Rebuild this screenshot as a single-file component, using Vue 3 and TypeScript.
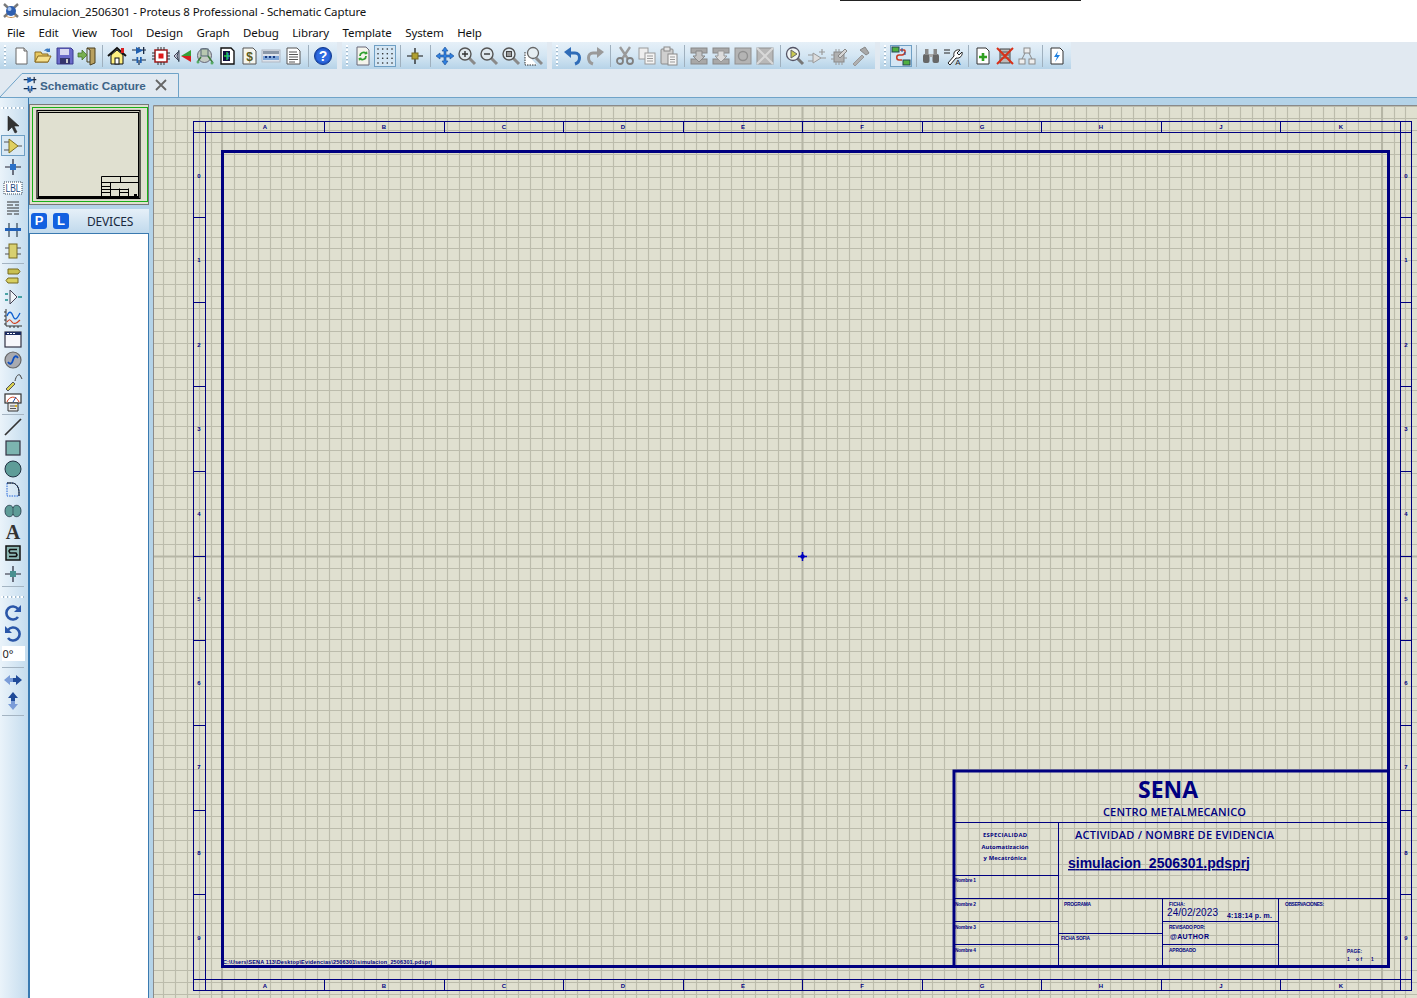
<script setup lang="ts">
import { computed } from 'vue'

// toolbar icons, inner markup of a 20x20 svg
const ink = '#222'
const dis = '#9a9a9a'
const icons: Record<string, string> = {
  newDoc: `<path d="M5 2h8l3 3v13H5z" fill="#fff" stroke="#666"/><path d="M13 2v3h3" fill="#ddd" stroke="#666"/>`,
  open: `<path d="M2 16V6h6l1 2h6v8z" fill="#e8c860" stroke="#8a6a20"/><path d="M2 16l3-6h13l-3 6z" fill="#f6e08c" stroke="#8a6a20"/><path d="M11 5c1-2 3-3 5-2l1-1v4h-4l1-1c-1-.5-2 0-3 0z" fill="#3a78c0"/>`,
  save: `<path d="M2 2h14l2 2v14H2z" fill="#6a6ac8" stroke="#3a3a90"/><rect x="5" y="3" width="9" height="6" fill="#d8d8f0"/><rect x="5" y="12" width="10" height="6" fill="#34346c"/><rect x="11" y="13" width="2" height="4" fill="#ccc"/>`,
  importDoor: `<path d="M10 2h8v15l-5 2V4z" fill="#b8a060" stroke="#4a4020"/><path d="M10 2v14h3" fill="none" stroke="#4a4020"/><path d="M1 7h4V4l5 5-5 5v-3H1z" fill="#78b050" stroke="#3c6c20" stroke-width=".7"/>`,
  home: `<path d="M1 10l9-8 9 8" fill="none" stroke="#111" stroke-width="2"/><path d="M4 9v9h12V9l-6-5z" fill="#fff080" stroke="#111"/><rect x="8" y="12" width="4" height="6" fill="#fff" stroke="#111"/><rect x="14" y="2" width="3" height="5" fill="#d82020"/>`,
  schem: `<path d="M10 1v5M3 4h14M10 14v5M3 14h5M12 14h5" stroke="#1a2a44" stroke-width="1.200" fill="none"/><path d="M7 1l7 3.500-7 3.500z" fill="#1f5fb0"/><rect x="14" y="1" width="1.300" height="7" fill="#1a2a44"/><rect x="7.500" y="11" width="1.700" height="6" fill="#1f5fb0"/><rect x="11" y="11" width="1.700" height="6" fill="#1f5fb0"/>`,
  chip: `<rect x="4" y="4" width="12" height="12" fill="#fff" stroke="#a01818" stroke-width="1.500"/><rect x="7.500" y="7.500" width="5" height="5" fill="#e01818"/><path d="M7 1v3M10 1v3M13 1v3M7 16v3M10 16v3M13 16v3M1 7h3M1 10h3M1 13h3M16 7h3M16 10h3M16 13h3" stroke="#333"/>`,
  view3d: `<path d="M1 10l5-5v10z" fill="#ccd" stroke="#445"/><path d="M8 10l10-6v6z" fill="#38a038"/><path d="M8 10h10v6z" fill="#d82020"/><path d="M6 4l-2 6 2 6" fill="none" stroke="#345"/>`,
  gerber: `<circle cx="9.500" cy="9.500" r="7" fill="#c4ccc4" stroke="#667"/><rect x="6" y="3" width="7" height="7" fill="#b8c8b0" stroke="#567"/><path d="M3 15l3-4M13 10l5 7" stroke="#3a7a3a" stroke-width="1.500"/><circle cx="3" cy="16" r="1.500" fill="#5a6"/><circle cx="17" cy="17" r="1.500" fill="#5a6"/>`,
  explorer: `<path d="M4 2h10l3 3v13H4z" fill="#fff" stroke="#111" stroke-width="1.400"/><rect x="6" y="5" width="7" height="10" fill="#101040"/><path d="M7 10h6M10 6v8" stroke="#20d040" stroke-width="1.400"/><path d="M11 7v6" stroke="#30a0f0"/>`,
  bom: `<path d="M4 2h10l3 3v13H4z" fill="#f6f6ee" stroke="#555"/><text x="10.500" y="15" font-size="12" font-family="Liberation Sans" font-weight="700" fill="#5a5a20" text-anchor="middle">$</text>`,
  ascii: `<rect x="1" y="4" width="18" height="12" fill="#dfe4ec" stroke="#b0b8c4"/><rect x="2" y="5" width="16" height="3" fill="#8c98a8"/><rect x="2" y="10" width="16" height="4" fill="#7fa6d8"/><path d="M4 11h2M8 11h2M12 11h2" stroke="#1a3a80" stroke-width="2.200"/>`,
  notes: `<path d="M4 2h10l3 3v13H4z" fill="#fff" stroke="#555"/><path d="M6 6h8M6 8.500h9M6 11h9M6 13.500h9M6 16h6" stroke="#555"/>`,
  help: `<circle cx="10" cy="10" r="8.500" fill="#2058c8" stroke="#123a90"/><circle cx="10" cy="10" r="6.800" fill="#2f6ae0"/><text x="10" y="15" font-size="14" font-family="Liberation Sans" font-weight="700" fill="#fff" text-anchor="middle">?</text>`,
  refresh: `<path d="M4 1h9l3 3v15H4z" fill="#f4f4ec" stroke="#667"/><path d="M7 10a3.500 3.500 0 0 1 6-2.500" fill="none" stroke="#30a030" stroke-width="1.800"/><path d="M13 10a3.500 3.500 0 0 1-6 2.500" fill="none" stroke="#30a030" stroke-width="1.800"/><path d="M11.500 8.500l3-.500-.5-3zM8.500 11.500l-3 .500.5 3z" fill="#30a030"/>`,
  grid: `<g fill="#222"><circle cx="3" cy="3" r=".8"/><circle cx="7.700" cy="3" r=".8"/><circle cx="12.300" cy="3" r=".8"/><circle cx="17" cy="3" r=".8"/><circle cx="3" cy="7.700" r=".8"/><circle cx="7.700" cy="7.700" r=".8"/><circle cx="12.300" cy="7.700" r=".8"/><circle cx="17" cy="7.700" r=".8"/><circle cx="3" cy="12.300" r=".8"/><circle cx="7.700" cy="12.300" r=".8"/><circle cx="12.300" cy="12.300" r=".8"/><circle cx="17" cy="12.300" r=".8"/><circle cx="3" cy="17" r=".8"/><circle cx="7.700" cy="17" r=".8"/><circle cx="12.300" cy="17" r=".8"/><circle cx="17" cy="17" r=".8"/></g>`,
  origin: `<path d="M10 2v16M2 10h16" stroke="#111" stroke-width="1.200"/><rect x="7" y="7" width="6" height="6" fill="#b0a030" stroke="#776a20"/>`,
  pan: `<path d="M10 1l3 4h-2v4h4V7l4 3-4 3v-2h-4v4h2l-3 4-3-4h2v-4H5v2l-4-3 4-3v2h4V5H7z" fill="#2f80e0" stroke="#1a4a90" stroke-width=".6"/>`,
  zoomIn: `<path d="M12 12l6 6" stroke="#8a8a8a" stroke-width="3"/><circle cx="8" cy="8" r="6" fill="#dfe8ee" stroke="#555" stroke-width="1.400"/><path d="M5 8h6M8 5v6" stroke="#333" stroke-width="1.400"/>`,
  zoomOut: `<path d="M12 12l6 6" stroke="#8a8a8a" stroke-width="3"/><circle cx="8" cy="8" r="6" fill="#dfe8ee" stroke="#555" stroke-width="1.400"/><path d="M5 8h6" stroke="#333" stroke-width="1.400"/>`,
  zoomFit: `<path d="M12 12l6 6" stroke="#8a8a8a" stroke-width="3"/><circle cx="8" cy="8" r="6" fill="#dfe8ee" stroke="#555" stroke-width="1.400"/><rect x="5.500" y="5.500" width="5" height="5" fill="#999" stroke="#444"/>`,
  zoomArea: `<path d="M2 6v13h12" fill="#fff" stroke="#333" stroke-dasharray="1.500 1"/><path d="M13 12l6 6" stroke="#8a8a8a" stroke-width="3"/><circle cx="10" cy="7" r="5.500" fill="#e6eef2" stroke="#666" stroke-width="1.300"/>`,
  undo: `<path d="M6 7h6c6 0 6 9 0 11" fill="none" stroke="#2f6cb8" stroke-width="3"/><path d="M8 1v11L1 6z" fill="#2f6cb8"/>`,
  redo: `<path d="M14 7H8c-6 0-6 9 0 11" fill="none" stroke="${dis}" stroke-width="3"/><path d="M12 1v11l7-6z" fill="${dis}"/>`,
  cut: `<path d="M5 1l8 12M15 1L7 13" stroke="#9a9a9a" stroke-width="2.400"/><circle cx="5" cy="15" r="3" fill="none" stroke="#808080" stroke-width="1.800"/><circle cx="15" cy="15" r="3" fill="none" stroke="#808080" stroke-width="1.800"/>`,
  copy: `<rect x="2" y="2" width="9" height="11" fill="#eee" stroke="${dis}"/><rect x="8" y="7" width="10" height="11" fill="#f4f4f4" stroke="${dis}"/><path d="M10 10h6M10 12.500h6M10 15h6" stroke="${dis}"/>`,
  paste: `<rect x="2" y="3" width="12" height="15" rx="1" fill="#cfcfcf" stroke="#8a8a8a"/><rect x="5" y="1" width="6" height="4" fill="#e4e4e4" stroke="#8a8a8a"/><rect x="9" y="8" width="9" height="11" fill="#f4f4f4" stroke="#8a8a8a"/><path d="M11 11h5M11 13.500h5M11 16h5" stroke="#999"/>`,
  blockCopy: `<rect x="2" y="2" width="16" height="5" fill="#a8a8a8" stroke="#888"/><rect x="2" y="13" width="16" height="5" fill="#a8a8a8" stroke="#888"/><path d="M7 5h6v5h3l-6 6-6-6h3z" fill="#c4c4c4" stroke="#888"/>`,
  blockMove: `<rect x="2" y="2" width="16" height="5" fill="#a8a8a8" stroke="#888"/><rect x="2" y="13" width="16" height="5" fill="#a8a8a8" stroke="#888"/><path d="M7 5h6v5h3l-6 6-6-6h3z" fill="#dcdcdc" stroke="#999"/>`,
  blockRotate: `<rect x="2" y="2" width="16" height="16" fill="#b4b4b4" stroke="#909090"/><circle cx="10" cy="10" r="4.500" fill="none" stroke="#909090" stroke-width="1.400"/>`,
  blockDelete: `<rect x="2" y="2" width="16" height="16" fill="#b8b8b8" stroke="#909090"/><path d="M2 2l16 16M18 2L2 18" stroke="#d8d8d8" stroke-width="2"/>`,
  pick: `<path d="M12 12l6 6" stroke="#777" stroke-width="3"/><circle cx="8" cy="8" r="6.500" fill="#f0f4f4" stroke="#556" stroke-width="1.300"/><path d="M6 4l6 4-6 4z" fill="#c8c850" stroke="#666"/>`,
  device: `<path d="M6 7v10l8-5z" fill="#ddd" stroke="${dis}"/><path d="M1 9h5M1 15h5M14 12h5M15 3v6M12 6h6" stroke="${dis}" stroke-width="1.200"/>`,
  package: `<rect x="5" y="6" width="10" height="10" fill="#b0b0b0" stroke="#888"/><path d="M7 3v3M10 3v3M7 16v3M10 16v3M13 16v3M2 9h3M2 13h3M15 12h3" stroke="#999"/><path d="M9 10l7-7 2 2-7 7z" fill="#d4d4d4" stroke="#888"/>`,
  tool: `<path d="M2 18l9-9 2 2-9 9z" fill="#b0b0b0" stroke="#999"/><path d="M9 4l5-3 4 6-3 2z" fill="#a8a8a8" stroke="#888"/>`,
  toggle: `<rect x="1" y="1" width="7" height="5" fill="#50b040" stroke="#245"/><rect x="12" y="14" width="7" height="5" fill="#50b040" stroke="#245"/><path d="M9 4h4c2 0 1 5-2 5H8c-3 0-3 5 0 5h3" fill="none" stroke="#c83820" stroke-width="1.500"/><path d="M11 2v4M14 6v3" stroke="#2050a0"/>`,
  find: `<rect x="2" y="8" width="6.500" height="9" rx="2" fill="#666"/><rect x="11.500" y="8" width="6.500" height="9" rx="2" fill="#666"/><rect x="4" y="3" width="3.500" height="6" fill="#888"/><rect x="12.500" y="3" width="3.500" height="6" fill="#888"/><rect x="8" y="8" width="4" height="3" fill="#aaa"/>`,
  wires: `<path d="M1 4h6M1 7h6" stroke="${ink}"/><path d="M5 17l6-7c-1-4 2-7 6-6l-3 3 2 2 3-3c1 3-2 7-6 6l-6 7z" fill="#fff" stroke="${ink}"/><text x="15" y="19" font-size="8" font-family="Liberation Sans" fill="${ink}" text-anchor="middle">A</text>`,
  addSheet: `<path d="M4 2h9l3 3v13H4z" fill="#fff" stroke="#333"/><path d="M10 7v8M6 11h8" stroke="#30a020" stroke-width="2.600"/>`,
  delSheet: `<rect x="5" y="3" width="10" height="14" fill="#bbb" stroke="#444"/><path d="M6 6h8M6 9h8M6 12h8" stroke="#555"/><path d="M2 2l16 16M18 2L2 18" stroke="#d83018" stroke-width="2"/>`,
  tree: `<rect x="7" y="2" width="6" height="5" fill="#eee" stroke="#8a8a8a"/><rect x="2" y="13" width="6" height="5" fill="#eee" stroke="#8a8a8a"/><rect x="12" y="13" width="6" height="5" fill="#eee" stroke="#8a8a8a"/><path d="M8 7l-3 6M12 7l3 6" stroke="#8a8a8a"/>`,
  mcad: `<path d="M4 2h9l3 3v13H4z" fill="#fff" stroke="#333"/><path d="M11 5l-4 6h3l-2 5 5-7h-3z" fill="#2080e0"/>`,
  select: `<path d="M5 1v15l4-4 3 6 2-1-3-6h5z" fill="#333" stroke="#222" stroke-width=".6"/>`,
  comp: `<path d="M6 3v14l9-7z" fill="#e0d060" stroke="#807020"/><path d="M1 6h5M1 14h5M15 10h4" stroke="#555" stroke-width="1.200"/>`,
  junction: `<path d="M10 2v16M2 10h16" stroke="#223" stroke-width="1.200"/><rect x="7" y="7" width="6" height="6" fill="#2a70c8"/>`,
  label: `<rect x="1" y="4" width="18" height="12" fill="#fff" stroke="#345" stroke-dasharray="1 1"/><text x="10" y="14" font-size="10" font-family="Liberation Sans" fill="#1a4a80" text-anchor="middle" textLength="15" lengthAdjust="spacingAndGlyphs">LBL</text>`,
  script: `<path d="M4 3h12M4 6h6M12 6h4M4 9h12M4 12h12M4 15h5M11 15h5" stroke="#333"/>`,
  bus: `<path d="M6 3v14M14 3v14" stroke="#234" stroke-width="1.100"/><rect x="2" y="8" width="16" height="3" fill="#2060b8"/>`,
  subckt: `<rect x="6" y="3" width="8" height="14" fill="#d8d070" stroke="#776a20"/><path d="M2 7h4M2 13h4M14 7h4M14 13h4" stroke="#555" stroke-width="1.200"/>`,
  terminal: `<path d="M5 3h10l2 2.500-2 2.500H5z" fill="#c8c050" stroke="#776a20"/><path d="M15 12H5l-2 2.500 2 2.500h10z" fill="#d8d060" stroke="#776a20"/>`,
  pin: `<path d="M7 3v14l7-7z" fill="#f0f4f8" stroke="#445"/><path d="M2 7h3M2 13h3M15 10h4" stroke="#1a8a8a" stroke-width="1.300"/>`,
  graph: `<path d="M3 1v17h16" fill="none" stroke="#333"/><path d="M1 4h2M1 8h2M1 12h2M1 16h2M7 18v2M11 18v2M15 18v2" stroke="#333"/><path d="M4 8c2-5 4-5 6 0s4 3 7-3" fill="none" stroke="#1060d0" stroke-width="1.300"/><path d="M4 14c2-3 3-3 5 0s5 1 8-2" fill="none" stroke="#d04020" stroke-width="1.200"/>`,
  tape: `<rect x="2" y="3" width="16" height="15" fill="#f6f6fa" stroke="#334" stroke-width="1.200"/><rect x="2" y="3" width="16" height="3" fill="#1a2a60"/><path d="M4 4.500h2M7 4.500h2M10 4.500h2" stroke="#fff"/>`,
  generator: `<circle cx="10" cy="10" r="8" fill="#a8aab0" stroke="#666" stroke-width="1.200"/><path d="M5 12c2 3 4 2 5-2s3-5 5-2" fill="none" stroke="#1050c0" stroke-width="1.800"/>`,
  probe: `<path d="M3 18l7-7 2 2-7 7z" fill="#d8d050" stroke="#555"/><path d="M12 10c1-5 3-7 5-6l2 4" fill="none" stroke="#444"/>`,
  meter: `<rect x="2" y="2" width="16" height="9" fill="#fff" stroke="#333" stroke-width="1.200"/><path d="M4 10c2-6 9-7 12 0" fill="none" stroke="#d04020"/><path d="M10 10l3-5" stroke="#1a4aa0"/><path d="M5 11h10v8H5z" fill="#e8e8e8" stroke="#333"/><path d="M7 14h5M7 16.500h6" stroke="#555"/><rect x="12" y="13" width="2" height="2" fill="#d8b020"/>`,
  line: `<path d="M2 18L18 2" stroke="#333" stroke-width="1.700"/>`,
  box: `<rect x="3" y="3" width="14" height="14" fill="#7cb4b0" stroke="#334" stroke-width="1.200"/>`,
  circle: `<circle cx="10" cy="10" r="8" fill="#5e9c98" stroke="#234" stroke-width="1"/>`,
  arc: `<path d="M4 3h5c4 0 7 4 7 9v4H4z" fill="none" stroke="#1f62d8" stroke-dasharray="1.500 1"/><path d="M4 3h5c4 0 7 4 7 9v4" fill="none" stroke="#111"/>`,
  path: `<path d="M2 10c0-7 7-7 8-3 1-4 8-4 8 3s-7 7-8 3c-1 4-8 4-8-3z" fill="#5e9c98" stroke="#234" stroke-width=".8"/><path d="M10 7v6" stroke="#234" stroke-width=".6"/>`,
  textA: `<text x="10" y="17" font-size="20" font-family="Liberation Serif" font-weight="700" fill="#333" text-anchor="middle">A</text>`,
  symbol: `<rect x="3" y="3" width="14" height="14" fill="#8cb8b4" stroke="#111" stroke-width="1.500"/><path d="M14 6.500H7l-1 1.500 1 2h6l1 2-1 1.500H6" fill="none" stroke="#111" stroke-width="1.600"/>`,
  marker: `<path d="M10 2v16M2 10h16" stroke="#223" stroke-width="1.200"/><rect x="7" y="7" width="6" height="6" fill="#4a9090"/>`,
  rotCw: `<path d="M15 14a6.500 6.500 0 1 1 0-8" fill="none" stroke="#2a56a8" stroke-width="2.600"/><path d="M18 2v7h-7z" fill="#2a56a8"/>`,
  rotCcw: `<path d="M5 14a6.500 6.500 0 1 0 0-8" fill="none" stroke="#2a56a8" stroke-width="2.600"/><path d="M2 2v7h7z" fill="#2a56a8"/>`,
  mirrorH: `<path d="M1 10l6-5v3h3v4H7v3z" fill="#7a9cd8"/><path d="M19 10l-6-5v3h-3v4h3v3z" fill="#1f4a98"/>`,
  mirrorV: `<path d="M10 1L5 7h3v3h4V7h3z" fill="#1f4a98"/><path d="M10 19l-5-6h3v-3h4v3h3z" fill="#7a9cd8"/>`,
}

const topGroups: string[][] = [
  ['newDoc', 'open', 'save', 'importDoor', '|', 'home', 'schem', 'chip', 'view3d', 'gerber', 'explorer', 'bom', 'ascii', 'notes', '|', 'help'],
  ['refresh', 'grid', '|', 'origin', '|', 'pan', 'zoomIn', 'zoomOut', 'zoomFit', 'zoomArea'],
  ['undo', 'redo', '|', 'cut', 'copy', 'paste', '|', 'blockCopy', 'blockMove', 'blockRotate', 'blockDelete', '|', 'pick', 'device', 'package', 'tool'],
  ['toggle', '|', 'find', 'wires', '|', 'addSheet', 'delSheet', 'tree', '|', 'mcad'],
]
const menus = ['File', 'Edit', 'View', 'Tool', 'Design', 'Graph', 'Debug', 'Library', 'Template', 'System', 'Help']
const sideTools = [
  ['select', 'comp', 'junction', 'label', 'script', 'bus', 'subckt'],
  ['terminal', 'pin', 'graph', 'tape', 'generator', 'probe', 'meter'],
  ['line', 'box', 'circle', 'arc', 'path', 'textA', 'symbol', 'marker'],
]

// sheet geometry, in page pixels (the svg viewBox starts at the canvas corner)
const originX = 802
const originY = 556
const pitch = 11.83

const gridX = computed(() => {
  const out: number[] = []
  for (let i = -55; i <= 55; i++) {
    const x = Math.round(originX + i * pitch) + 0.5
    if (x > 153 && x < 1417) out.push(x)
  }
  return out
})
const gridY = computed(() => {
  const out: number[] = []
  for (let i = -40; i <= 40; i++) {
    const y = Math.round(originY + i * pitch) + 0.5
    if (y > 105 && y < 998) out.push(y)
  }
  return out
})
const majorX = [222, 802.5, 1382]
const colTicks = [324.5, 444.5, 563.5, 683.5, 802.5, 922.5, 1041.5, 1161.5, 1280.5]
const rowTicks = [217.5, 302.5, 386.5, 471.5, 556.5, 640.5, 725.5, 810.5, 894.5]
const colLabels = [
  ['A', 265], ['B', 384], ['C', 504], ['D', 623], ['E', 743], ['F', 862], ['G', 982], ['H', 1101], ['J', 1221], ['K', 1341],
] as const
const rowLabels = [176, 260, 345, 429, 514, 599, 683, 767, 853, 938]
const blockLines = [
  [954, 822.5, 1388, 822.5],
  [1058.5, 822, 1058.5, 966],
  [954, 875.5, 1058, 875.5],
  [954, 898.5, 1388, 898.5],
  [954, 921.5, 1058, 921.5],
  [954, 944.5, 1058, 944.5],
  [1162.5, 898, 1162.5, 966],
  [1058, 933.5, 1162, 933.5],
  [1278.5, 898, 1278.5, 966],
  [1162, 921.5, 1278, 921.5],
  [1162, 944.5, 1278, 944.5],
]
const tinyLabels = [
  ['Nombre 1', 955, 882, 21],
  ['Nombre 2', 955, 906, 21],
  ['Nombre 3', 955, 929, 21],
  ['Nombre 4', 955, 952, 21],
  ['PROGRAMA', 1064, 906, 27],
  ['FICHA SOFIA', 1061, 940, 29],
  ['FICHA:', 1169, 906, 16],
  ['REVISADO POR:', 1169, 929, 36],
  ['APROBADO', 1169, 952, 27],
  ['OBSERVACIONES:', 1285, 906, 39],
] as const
</script>

<template>
  <div class="app">
    <div class="titlebar">
      <svg class="logo" width="16" height="16" viewBox="0 0 16 16">
        <path d="M1 1l14 13M15 1L1 14" stroke="#7a7a7a" stroke-width="2.400" />
        <circle cx="8" cy="8" r="5" fill="#2f5fb0" />
        <circle cx="6.500" cy="6" r="2" fill="#a8c4ee" />
        <path d="M3 13c3 2 7 2 10 0" stroke="#c89050" fill="none" />
      </svg>
      <span>simulacion_2506301 - Proteus 8 Professional - Schematic Capture</span>
      <div class="topline"></div>
    </div>

    <div class="menubar">
      <span v-for="m in menus" :key="m">{{ m }}</span>
    </div>

    <div class="toolbar">
      <div v-for="(group, g) in topGroups" :key="g" class="tgroup">
        <i class="grip"></i>
        <template v-for="(name, n) in group" :key="n">
          <i v-if="name === '|'" class="tsep"></i>
          <div v-else class="tbtn" :class="{ on: name === 'grid' || name === 'toggle' }">
            <svg width="20" height="20" viewBox="0 0 20 20" v-html="icons[name]"></svg>
          </div>
        </template>
      </div>
    </div>

    <div class="tabstrip">
      <div class="tab">
        <svg class="tabshape" width="180" height="25" viewBox="0 0 180 25">
          <path d="M0 24L22 .5H178.500V24" fill="#e1e9f1" stroke="#6fa3c8" />
        </svg>
        <svg class="tabicon" width="18" height="18" viewBox="0 0 20 20" v-html="icons.schem"></svg>
        <span class="tabtext">Schematic Capture</span>
        <svg class="tabclose" width="14" height="14" viewBox="0 0 14 14">
          <path d="M2 2l10 10M12 2L2 12" stroke="#666" stroke-width="1.800" />
        </svg>
      </div>
    </div>

    <div class="work">
      <div class="sidebar">
        <i class="hgrip first"></i>
        <div class="sidegroup">
          <div v-for="(name, n) in sideTools[0]" :key="n" class="sbtn" :class="{ on: name === 'comp' }">
            <svg width="20" height="20" viewBox="0 0 20 20" v-html="icons[name]"></svg>
          </div>
        </div>
        <i class="ssep"></i>
        <div class="sidegroup">
          <div v-for="(name, n) in sideTools[1]" :key="n" class="sbtn">
            <svg width="20" height="20" viewBox="0 0 20 20" v-html="icons[name]"></svg>
          </div>
        </div>
        <i class="ssep"></i>
        <div class="sidegroup">
          <div v-for="(name, n) in sideTools[2]" :key="n" class="sbtn">
            <svg width="20" height="20" viewBox="0 0 20 20" v-html="icons[name]"></svg>
          </div>
        </div>
        <i class="ssep wide"></i>
        <i class="hgrip"></i>
        <div class="sbtn"><svg width="20" height="20" viewBox="0 0 20 20" v-html="icons.rotCw"></svg></div>
        <div class="sbtn"><svg width="20" height="20" viewBox="0 0 20 20" v-html="icons.rotCcw"></svg></div>
        <div class="angle">0°</div>
        <i class="ssep angsep"></i>
        <div class="sbtn"><svg width="20" height="20" viewBox="0 0 20 20" v-html="icons.mirrorH"></svg></div>
        <div class="sbtn"><svg width="20" height="20" viewBox="0 0 20 20" v-html="icons.mirrorV"></svg></div>
        <i class="ssep tail"></i>
      </div>

      <div class="panel">
        <div class="preview">
          <svg width="120" height="101" viewBox="29 104 120 101">
            <rect x="32.500" y="107.500" width="115" height="94" fill="none" stroke="#18b018" />
            <rect x="37" y="110.500" width="103" height="88" fill="none" stroke="#000" stroke-width="1.200" />
            <rect x="38.500" y="112.500" width="100" height="84" fill="none" stroke="#000" />
            <path d="M38 197h101" stroke="#000" stroke-width="2" />
            <path d="M101.500 176.500v20M101.500 176.500h37M101.500 182.500h37M110.500 182.500v14M101.500 186.500h9M101.500 189.500h9M101.500 192.500h9M119.500 188.500v8M110.500 189.500h18M119.500 192.500h9M128.500 188.500v8M120.500 177v5" fill="none" stroke="#000" />
            <rect x="134" y="194" width="3" height="3" fill="#000" />
          </svg>
        </div>
        <div class="devhead">
          <b class="pl">P</b>
          <b class="pl">L</b>
          <span class="devtitle">DEVICES</span>
        </div>
        <div class="devlist"></div>
      </div>

      <div class="canvas">
        <svg class="sheet" width="1264" height="893" viewBox="153 105 1264 893">
          <rect x="153" y="105" width="1264" height="893" fill="#e0e0d0" />
          <g stroke="#bcbcac" stroke-width="1.150">
            <line v-for="x in gridX" :key="'x' + x" :x1="x" y1="105" :x2="x" y2="998" />
            <line v-for="y in gridY" :key="'y' + y" x1="153" :y1="y" x2="1417" :y2="y" />
          </g>
          <g stroke="#b6b6a6" stroke-width="2">
            <line v-for="x in majorX" :key="'m' + x" :x1="x" y1="105" :x2="x" y2="998" />
            <line x1="153" y1="556.500" x2="1417" y2="556.500" />
          </g>
          <path d="M153.500 998V105.500H1417" fill="none" stroke="#8a8a8a" />

          <g fill="none" stroke="#000080" shape-rendering="crispEdges">
            <rect x="193.500" y="121.500" width="1218" height="869" />
            <line x1="193" y1="132.500" x2="1412" y2="132.500" />
            <line x1="193" y1="979.500" x2="1412" y2="979.500" />
            <line x1="205.500" y1="121" x2="205.500" y2="991" />
            <line x1="1400.500" y1="121" x2="1400.500" y2="991" />
            <line v-for="x in colTicks" :key="'c' + x" :x1="x" y1="121" :x2="x" y2="132" />
            <line v-for="x in colTicks" :key="'d' + x" :x1="x" y1="979" :x2="x" y2="990" />
            <line v-for="y in rowTicks" :key="'r' + y" x1="193" :y1="y" x2="205" :y2="y" />
            <line v-for="y in rowTicks" :key="'s' + y" x1="1400" :y1="y" x2="1411" :y2="y" />
          </g>
          <g class="axis" text-anchor="middle">
            <template v-for="[label, x] in colLabels" :key="label">
              <text :x="x" y="129">{{ label }}</text>
              <text :x="x" y="988">{{ label }}</text>
            </template>
            <template v-for="(y, i) in rowLabels" :key="y">
              <text x="199" :y="y + 2">{{ i }}</text>
              <text x="1406" :y="y + 2">{{ i }}</text>
            </template>
          </g>

          <rect x="222.500" y="151.500" width="1166" height="815" fill="none" stroke="#000080" stroke-width="3" />
          <path d="M954 967V771H1388" fill="none" stroke="#000080" stroke-width="3" />
          <g stroke="#000080" shape-rendering="crispEdges">
            <line v-for="(l, i) in blockLines" :key="i" :x1="l[0]" :y1="l[1]" :x2="l[2]" :y2="l[3]" />
          </g>

          <path d="M802.500 552v9M798 556.500h9" stroke="#0000c0" stroke-width="1.500" />
          <circle cx="802.500" cy="556.500" r="2.200" fill="#0000c0" />

          <g class="hand" fill="#000080">
            <text x="1168" y="798" class="h-sena" text-anchor="middle" textLength="60">SENA</text>
            <text x="1174.500" y="816" class="h-sub" text-anchor="middle" textLength="143">CENTRO METALMECANICO</text>
            <text x="1174.500" y="839" class="h-sub" text-anchor="middle" textLength="199">ACTIVIDAD / NOMBRE DE EVIDENCIA</text>
            <text x="1068" y="868" class="h-file" textLength="182">simulacion_2506301.pdsprj</text>
            <text x="1005" y="837" class="h-tiny" text-anchor="middle" textLength="44">ESPECIALIDAD</text>
            <text x="1005" y="849" class="h-tiny" text-anchor="middle" textLength="47">Automatización</text>
            <text x="1005" y="860" class="h-tiny" text-anchor="middle" textLength="43">y Mecatrónica</text>
            <text v-for="t in tinyLabels" :key="t[0]" :x="t[1]" :y="t[2]" class="h-micro" :textLength="t[3]">{{ t[0] }}</text>
            <text x="1167" y="916" class="h-date" textLength="51">24/02/2023</text>
            <text x="1227" y="918" class="h-time" textLength="45">4:18:14 p. m.</text>
            <text x="1170" y="939" class="h-time" textLength="39">@AUTHOR</text>
            <text x="1347" y="953" class="h-micro" textLength="15">PAGE:</text>
            <text x="1347" y="961" class="h-micro">1</text>
            <text x="1356" y="961" class="h-micro" textLength="6">of</text>
            <text x="1371" y="961" class="h-micro">1</text>
            <text x="223" y="964" class="h-path" textLength="209">C:\Users\SENA 113\Desktop\Evidencias\2506301\simulacion_2506301.pdsprj</text>
          </g>
        </svg>
      </div>
    </div>
  </div>
</template>

<style scoped>
.app {
  width: 1417px;
  height: 998px;
  display: flex;
  flex-direction: column;
  overflow: hidden;
  background: #fff;
  font-family: 'Noto Sans', 'Open Sans', sans-serif;
  color: #111;
}

.titlebar {
  position: relative;
  height: 22px;
  display: flex;
  align-items: center;
  gap: 4px;
  padding-left: 3px;
  font-size: 11.500px;
  letter-spacing: -0.12px;
}

.topline {
  position: absolute;
  left: 840px;
  top: 0;
  width: 241px;
  height: 1px;
  background: #222;
}

.menubar {
  height: 20px;
  display: flex;
  align-items: center;
  gap: 13.600px;
  padding-left: 7px;
  font-size: 11.500px;
  letter-spacing: -0.12px;
}

.toolbar {
  height: 27px;
  display: flex;
  gap: 5px;
  background: #e1e9f1;
}

.tgroup {
  position: relative;
  display: flex;
  align-items: center;
  padding: 0 3px 0 10px;
  background: linear-gradient(#e6f0f8, #d4e6f3 50%, #b6d3e8);
}

.grip {
  position: absolute;
  left: 4px;
  top: 3px;
  bottom: 3px;
  width: 2px;
  background: repeating-linear-gradient(#fff 0 2px, #9fb8cc 2px 3px, transparent 3px 4px);
}

.tbtn {
  width: 22px;
  height: 22px;
  display: flex;
  align-items: center;
  justify-content: center;
  box-sizing: border-box;
}

.tbtn.on {
  border: 1px solid #6f9fc4;
  background: #d4e6f4;
}

.tsep {
  width: 8px;
  height: 22px;
  background: linear-gradient(#9fb0be, #9fb0be) center / 1px 100% no-repeat;
}

.tabstrip {
  height: 29px;
  background: #e1e9f1;
  border-bottom: 1px solid #6fa3c8;
  box-sizing: border-box;
  display: flex;
  align-items: flex-end;
}

.tab {
  position: relative;
  width: 180px;
  height: 24px;
  display: flex;
  align-items: center;
  padding-left: 21px;
  box-sizing: border-box;
}

.tabshape {
  position: absolute;
  left: 0;
  top: 0;
}

.tabicon,
.tabtext,
.tabclose {
  position: relative;
  flex: none;
}

.tabtext {
  margin-left: 1px;
  font-size: 11.700px;
  font-family: 'Liberation Sans', sans-serif;
  font-weight: 700;
  color: #3d6488;
  width: 106px;
  white-space: nowrap;
}

.tabclose {
  margin-left: 8px;
}

.work {
  flex: 1;
  min-height: 0;
  display: flex;
  background: #b4d3e8;
}

.sidebar {
  width: 28px;
  flex: none;
  display: flex;
  flex-direction: column;
  align-items: center;
  padding-right: 2px;
  box-sizing: border-box;
  margin-right: 1px;
  box-shadow: 1px 0 0 #3a7ab0;
  background: linear-gradient(90deg, #eaf3fa, #c4dcee);
}

.sidegroup {
  display: flex;
  flex-direction: column;
}

.hgrip {
  display: block;
  width: 24px;
  height: 2px;
  margin-top: 7px;
  flex: none;
  background: repeating-linear-gradient(90deg, #fff 0 2px, #9fb8cc 2px 3px, transparent 3px 4px);
}

.hgrip.first {
  margin: 9px 0 5px;
}

.sbtn {
  width: 24px;
  height: 21px;
  flex: none;
  display: flex;
  align-items: center;
  justify-content: center;
  box-sizing: border-box;
}

.sbtn.on {
  border: 1px solid #6f9fc4;
  background: #d8e8f4;
}

.ssep {
  display: block;
  flex: none;
  width: 22px;
  height: 1px;
  margin: 2px 0 1px;
  background: #a4b4c2;
}

.ssep.wide {
  margin: 2px 0 2px;
}

.ssep.angsep {
  margin: 6px 0 1px;
}

.ssep.tail {
  margin: 4px 0 0;
}

.hgrip + .sbtn {
  margin-top: 4px;
}

.angle {
  width: 23px;
  height: 15px;
  margin-top: 2px;
  flex: none;
  background: #fff;
  font-size: 11px;
  line-height: 15px;
  padding-left: 1px;
  box-sizing: border-box;
  color: #222;
}

.panel {
  width: 120px;
  flex: none;
  display: flex;
  flex-direction: column;
  margin-right: 4px;
  padding-top: 6px;
}

.preview {
  height: 101px;
  background: #e0e0d0;
  box-shadow: inset 0 0 0 1px #777;
  flex: none;
}

.preview svg {
  display: block;
}

.devhead {
  height: 24px;
  margin-top: 4px;
  flex: none;
  display: flex;
  align-items: center;
  gap: 6px;
  padding-left: 2px;
  background: linear-gradient(#e6f0f8, #c0d9ec);
}

.pl {
  width: 16px;
  height: 16px;
  border-radius: 3px;
  background: #1260e0;
  color: #fff;
  font: 700 13px/16px 'Liberation Sans', sans-serif;
  text-align: center;
}

.devtitle {
  margin-left: 12px;
  font-size: 12px;
  letter-spacing: -0.2px;
  color: #1a2a40;
}

.devlist {
  flex: 1;
  background: #fff;
  border: 1px solid #3a7ab0;
  border-bottom: 0;
}

.canvas {
  flex: 1;
  margin-top: 7px;
  min-width: 0;
  overflow: hidden;
  background: #e0e0d0;
}

.sheet {
  display: block;
}

.axis text {
  font: 700 6px 'Liberation Sans', sans-serif;
  fill: #000080;
}

.h-sena {
  font: 700 23px 'Open Sans', sans-serif;
}

.h-sub {
  font: 600 11px 'Open Sans', sans-serif;
}

.h-file {
  font: 700 14px 'Liberation Sans', sans-serif;
  text-decoration: underline;
}

.h-tiny {
  font: 700 5.800px 'Open Sans', sans-serif;
}

.h-micro {
  font: 700 4.800px 'Liberation Sans', sans-serif;
}

.h-date {
  font: 400 10px 'Liberation Sans', sans-serif;
}

.h-time {
  font: 700 7px 'Liberation Sans', sans-serif;
}

.h-path {
  font: 700 5.500px 'Liberation Sans', sans-serif;
}
</style>

<style>
html,
body {
  margin: 0;
  overflow: hidden;
}
</style>
